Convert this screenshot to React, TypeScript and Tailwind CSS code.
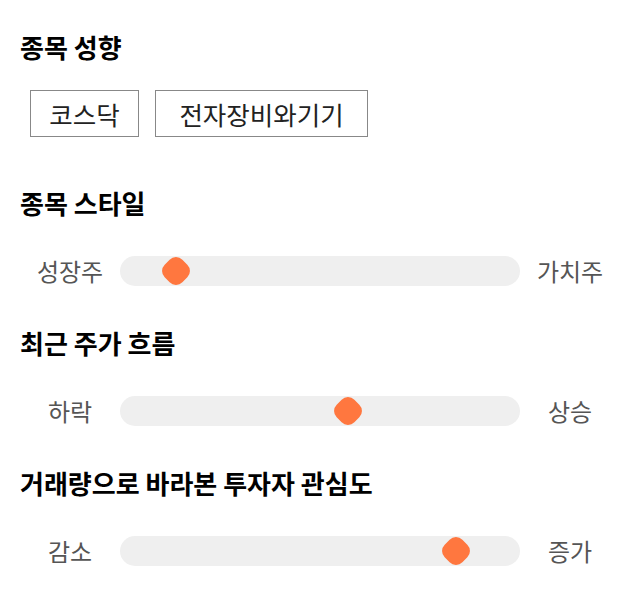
const sectors = [
  { name: "코스닥", width: "w-[109px]" },
  { name: "전자장비와기기", width: "w-[213px]" },
];

const sliders = [
  { title: "종목 스타일", left: "성장주", right: "가치주", value: 14 },
  { title: "최근 주가 흐름", left: "하락", right: "상승", value: 57 },
  { title: "거래량으로 바라본 투자자 관심도", left: "감소", right: "증가", value: 84 },
];

const Slider = ({ left, right, value }: { left: string; right: string; value: number }) => {
  return (
    <div className="mt-[37px] flex items-center">
      <span className="w-[100px] text-center text-[24px] leading-[30px] text-[#555]">{left}</span>
      <div className="relative h-[30px] flex-1 rounded-full bg-[#efefef]">
        <div
          className="absolute top-1/2 h-[25px] w-[25px] -translate-x-1/2 -translate-y-1/2 rotate-45 rounded-[9px] bg-[#ff773f]"
          style={{ left: `${value}%` }}
        />
      </div>
      <span className="w-[100px] text-center text-[24px] leading-[30px] text-[#555]">{right}</span>
    </div>
  );
};

export default function App() {
  return (
    <div
      className="min-h-[606px] bg-white px-5 pt-[31px] text-black"
      style={{ fontFamily: '"Noto Sans CJK KR", "Noto Sans", sans-serif' }}
    >
      <h2 className="text-[26px] font-bold leading-[32px]">종목 성향</h2>
      <div className="mt-[27px] flex gap-4 pl-[10px]">
        {sectors.map((s) => (
          <button
            key={s.name}
            className={`${s.width} h-[47px] border border-[#888] text-center text-[25.5px] leading-none text-[#222]`}
          >
            {s.name}
          </button>
        ))}
      </div>
      {sliders.map((s, idx) => (
        <div key={idx} className={idx === 0 ? "mt-[50px]" : "mt-[41px]"}>
          <h2 className="text-[26px] font-bold leading-[32px]">{s.title}</h2>
          <Slider left={s.left} right={s.right} value={s.value} />
        </div>
      ))}
    </div>
  );
}
